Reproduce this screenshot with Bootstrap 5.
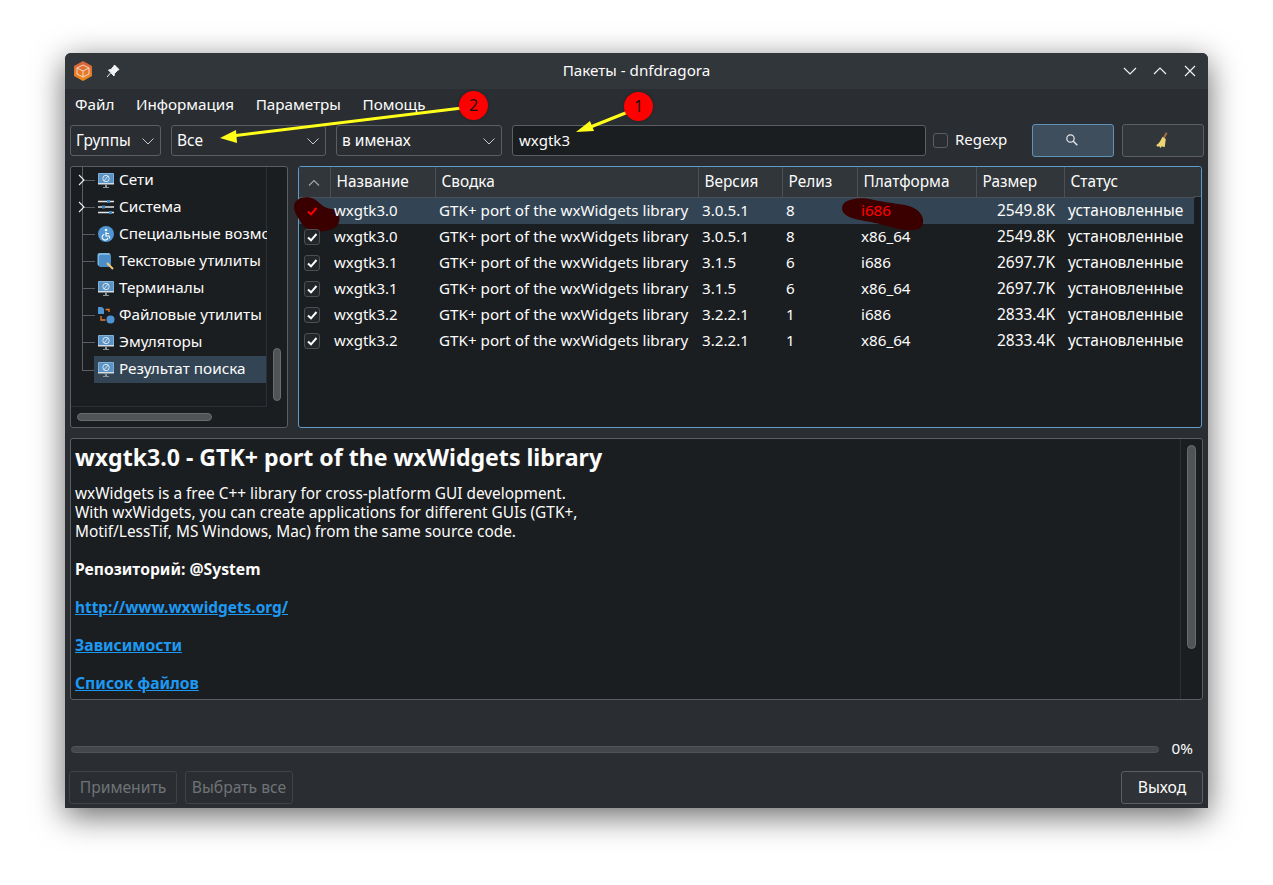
<!DOCTYPE html>
<html lang="ru">
<head>
<meta charset="utf-8">
<title>Пакеты - dnfdragora</title>
<link href="https://cdn.jsdelivr.net/npm/bootstrap@5.3.0/dist/css/bootstrap.min.css" rel="stylesheet">
<style>
html,body{background:#fff;height:885px;overflow:hidden}
body{font-family:"Noto Sans",sans-serif;font-size:15.25px;color:#fcfcfc;position:relative}
.win{position:relative;margin:53px 0 0 65px;width:1143px;height:755px;background:#2a2e32;border-radius:6px 6px 0 0;box-shadow:0 8px 32px rgba(0,0,0,.6);display:flex;flex-direction:column}
.tbar{height:36px;background:#31363b;border-radius:6px 6px 0 0;flex:none;position:relative;padding:0 8px}
.ttl{position:absolute;left:0;right:0;top:0;line-height:34px;text-align:center;font-size:15.2px}
.menubar{height:36px;padding:0 10px;gap:21.500px;flex:none;line-height:30px}
.tools{height:31px;padding:0 4px 0 5px;flex:none}
.form-select.cb,.form-control.ed{background-color:#2a2e32;border:1px solid #5b5f63;border-radius:3px;color:#fcfcfc;font-size:15.5px;height:31px;padding:0 0 1px 5px;box-shadow:none;line-height:28px}
.form-select.cb{background-position:right 5px center;background-size:14px 14px;background-image:url("data:image/svg+xml,%3csvg xmlns='http://www.w3.org/2000/svg' viewBox='0 0 14 14'%3e%3cpath fill='none' stroke='%23c8cacc' d='M1.500 4.500 7 10l5.500-5.500'/%3e%3c/svg%3e")}
.form-control.ed{background:#1b1e20;padding-left:6px;font-size:15px}
.w1{width:91px;margin-right:10px}.w2{width:155px;margin-right:10px}.w3{width:166px;margin-right:10px}.w4{width:414px;margin-right:7px}
.rx{width:15px;height:15px;border:1px solid #5b5f63;border-radius:3px;background:#2a2e32;margin-right:7px;flex:none}
.rxl{width:77px;padding-bottom:2px;font-size:15px}
.tb{height:33px;width:82px;border-radius:3px;border:1px solid #5b5f63;background:#31363b;margin-top:-1px;display:flex;align-items:center;justify-content:center;padding:0}
.tb.on{background:#3f4e5d;border-color:#5f93b8;margin-right:8px;padding-right:2px}
.mid{height:262px;margin-top:10px;padding:0 6px 0 5px;gap:10px;flex:none}
.tree{width:218px;flex:none;background:#1b1e20;border:1px solid #5b5f63;border-radius:3px;position:relative;overflow:hidden;font-size:15.3px}
.tr{height:27px;display:flex;align-items:center;position:relative;white-space:nowrap;overflow:hidden;width:196px;padding:0 0 2px 26px}
.treelist{position:absolute;left:0;top:0;width:196px;height:240px;border-right:1px solid #2c3034;border-bottom:1px solid #2c3034}
.tr.sel{background:#334554;margin-left:23px;padding-left:3px;width:172px}
.tr svg.ic{width:18px;height:18px;flex:none;margin-right:4px}
.vline{position:absolute;left:11px;top:0;width:1px;height:203px;background:#5b5f63}
.hl{position:absolute;left:11px;width:13px;height:1px;background:#5b5f63}
.exp{position:absolute;left:4px;top:6px;width:14px;height:14px}
.sb{position:absolute;background:#505456;border:1px solid #686c6e;border-radius:5px}
.frame{flex:1;background:#1b1e20;border:1px solid #5d9dcc;border-radius:3px;position:relative}
.grid{table-layout:fixed;border-collapse:collapse;width:895px;margin:0;color:#fcfcfc;font-size:15.2px}
.grid th{height:30px;background:#31363b;font-weight:400;border-right:1px solid #4b5055;border-bottom:1px solid #4b5055;padding:0 0 0 6px;white-space:nowrap;font-size:15.4px}
.grid td{height:26px;padding:0 0 2px 4px;white-space:nowrap;line-height:24px}
.grid td.ck{padding:0;vertical-align:top}
.grid tr.sel td{background:#334554}
.grid td.rgt{text-align:right;padding:0 9px 2px 0;font-size:15.5px}
.grid td.st{font-size:15.500px}
.grid td.nm{font-size:15px}
.hfill{position:absolute;left:895px;right:0;top:0;height:30px;background:#31363b;border-bottom:1px solid #4b5055;border-radius:0 3px 0 0}
.chk{display:block;width:16px;height:16px;border:1px solid #4a4f54;border-radius:3px;background:#232629;margin:5px 0 0 5px}
.chk svg{display:block;width:14px;height:14px}
.blobs{position:absolute;left:0;top:0;width:10px;height:10px;overflow:visible;z-index:0;pointer-events:none}
.over{position:relative;z-index:1}
.red{color:#f00}
.detail{height:262px;margin:10px 5px 0;background:#1b1e20;border:1px solid #5b5f63;border-radius:3px;position:relative;overflow:hidden;flex:none;padding:4px 0 0 4px;line-height:19px;font-size:15.4px}
.detail h1{font-size:23.100px;font-weight:700;line-height:28px;margin:0 0 13px;white-space:nowrap;color:#fcfcfc}
.detail p{margin:0 0 19px}
.detail p.bc{font-size:15.700px}
.detail a{color:#1d99f3;font-weight:700;text-decoration:underline}
.dsb{position:absolute;right:0;top:0;bottom:0;width:22px;border-left:1px solid #2c3034}
.prog{margin-top:43px;padding:0 15px 0 6px;height:13px;gap:13px;flex:none}
.prog span{padding-bottom:2px}
.track{flex:1;height:7px;background:#44484b;border:1px solid #505456;border-radius:4px}
.btm{margin-top:15px;padding:0 5px 0 4px;flex:none;gap:8px}
.bb{height:33px;background:#2f3337;border:1px solid #5b5f63;border-radius:3px;color:#fcfcfc;font-size:15.700px;padding:0 0 1px;line-height:30px}
.bb:disabled{background:#2a2e32;border-color:#3f4347;color:#6f7376;opacity:1}
.w108{width:108px}.w82{width:82px}
.anno{position:absolute;left:0;top:0;width:1273px;height:885px;pointer-events:none;overflow:visible}
.pin{position:absolute;width:29px;height:29px;background:#f00;color:#111;font-size:16px;line-height:28px;text-align:center;box-shadow:0 0 3px rgba(0,0,0,.35)}
</style>
</head>
<body>
<svg width="0" height="0" class="position-absolute">
<defs>
<symbol id="mon" viewBox="0 0 18 18"><rect x="1" y="2" width="16" height="11" rx="1" fill="#7fb1d8"/><rect x="2" y="3" width="14" height="9" fill="#5a93c4"/><path d="M1 12h16v1.500H1z" fill="#d5dde3"/><circle cx="9" cy="7.500" r="3.200" fill="none" stroke="#d6e4ef" stroke-width="1"/><path d="m7 10 4-5" stroke="#d6e4ef"/><path d="M6 16h6v1H6zM8 13.500h2V16H8z" fill="#8d9499"/></symbol>
<symbol id="sli" viewBox="0 0 18 18"><path d="M1 3.500h16M1 9h16M1 14.500h16" stroke="#e4e6e8" stroke-width="1.500"/><rect x="10" y="2" width="3" height="3" fill="#3d87c4"/><rect x="5" y="7.500" width="3" height="3" fill="#3d87c4"/><rect x="12" y="13" width="3" height="3" fill="#3d87c4"/></symbol>
<symbol id="acc" viewBox="0 0 18 18"><circle cx="9" cy="9" r="8" fill="#4f95d2"/><circle cx="9" cy="5" r="1.300" fill="#fff"/><path d="M9 7v4h3l1 2.500M9 8.500h3M7.300 9.200A3 3 0 1 0 11 13" fill="none" stroke="#fff" stroke-width="1.100"/></symbol>
<symbol id="txt" viewBox="0 0 18 18"><rect x="0.500" y="1" width="13" height="13" rx="2" fill="#7fb6de"/><rect x="2" y="3" width="12" height="12" rx="1.500" fill="#4b8dc6"/><path d="m10 11 6 6" stroke="#f2c879" stroke-width="2"/></symbol>
<symbol id="fil" viewBox="0 0 18 18"><path d="M1 1h4l2 2v5H1z" fill="#4b93d3"/><circle cx="13.500" cy="13.500" r="4" fill="#4b93d3"/><path d="M8.500 3.500H12V6M4 10v4h4.500" fill="none" stroke="#ee7b2b" stroke-width="1.300"/></symbol>
<symbol id="chk" viewBox="0 0 14 14"><path d="m3 7.500 3 2.800L11.500 4" fill="none" stroke="currentColor" stroke-width="2"/></symbol>
<symbol id="exp" viewBox="0 0 14 14"><path d="m4 2 5 5-5 5" fill="none" stroke="#eceff1" stroke-width="1.100"/></symbol>
</defs>
</svg>

<div class="win">
  <div class="tbar d-flex align-items-center">
    <svg width="20" height="22" viewBox="0 0 20 22" style="margin-top:-1px"><defs><linearGradient id="og" x1="0" y1="0" x2="0" y2="1"><stop offset="0" stop-color="#d2613f"/><stop offset="1" stop-color="#f08a1c"/></linearGradient></defs><path d="M10 1 19 6v10l-9 5-9-5V6z" fill="url(#og)"/><path d="m10 5 6 3v6l-6 3-6-3V8zM4 8l6 3 6-3M10 11v6" fill="none" stroke="#f6d9c4" stroke-width="1"/></svg>
    <svg width="14" height="14" viewBox="0 0 14 14" style="margin-left:13px"><path d="M8.500 1 13 5.500 11.500 6.500 8.500 9.500 8 12 2.500 6 5 5.500 7.500 2.500zM4.500 9 1 13" fill="#f2f3f4" stroke="#f2f3f4" stroke-width="1"/></svg>
    <div class="ttl">Пакеты - dnfdragora</div>
    <div class="ms-auto d-flex gap-3 position-relative" style="margin-right:3px">
      <svg width="14" height="14" viewBox="0 0 14 14"><path d="m1 4 6 6 6-6" fill="none" stroke="#f0f1f2" stroke-width="1.200"/></svg>
      <svg width="14" height="14" viewBox="0 0 14 14"><path d="m1 10 6-6 6 6" fill="none" stroke="#f0f1f2" stroke-width="1.200"/></svg>
      <svg width="14" height="14" viewBox="0 0 14 14"><path d="m2 2 10 10M12 2 2 12" fill="none" stroke="#f0f1f2" stroke-width="1.200"/></svg>
    </div>
  </div>
  <div class="menubar d-flex"><span>Файл</span><span>Информация</span><span>Параметры</span><span>Помощь</span></div>
  <div class="tools d-flex align-items-center">
    <select class="form-select cb w1"><option>Группы</option></select>
    <select class="form-select cb w2"><option>Все</option></select>
    <select class="form-select cb w3"><option>в именах</option></select>
    <input class="form-control ed w4" value="wxgtk3">
    <span class="rx"></span><span class="rxl">Regexp</span>
    <button class="btn tb on" aria-label="Поиск"><svg width="14" height="14" viewBox="0 0 14 14"><circle cx="5.500" cy="5.500" r="3.700" fill="none" stroke="#e6e8ea" stroke-width="1.200"/><path d="m8.300 8.300 4 4" stroke="#e6e8ea" stroke-width="1.400"/></svg></button>
    <button class="btn tb" aria-label="Очистить"><svg width="18" height="18" viewBox="0 0 16 16"><path d="M10.500 1 12 2 9.500 6.500 8 5.500z" fill="#a8733a"/><path d="M7.500 5 10.500 7 9.500 14.500 7 13.500 6 15 4.500 13.500 3 14 2 12.500C4.500 11 6 8.500 7.500 5z" fill="#ecd373"/></svg></button>
  </div>

  <div class="mid d-flex">
    <div class="tree">
      <div class="treelist">
        <div class="vline"></div>
        <div class="tr"><i class="hl" style="top:13px"></i><svg class="exp"><use href="#exp"/></svg><svg class="ic"><use href="#mon"/></svg>Сети</div>
        <div class="tr"><i class="hl" style="top:13px"></i><svg class="exp"><use href="#exp"/></svg><svg class="ic"><use href="#sli"/></svg>Система</div>
        <div class="tr"><i class="hl" style="top:13px"></i><svg class="ic"><use href="#acc"/></svg>Специальные возможности</div>
        <div class="tr"><i class="hl" style="top:13px"></i><svg class="ic"><use href="#txt"/></svg>Текстовые утилиты</div>
        <div class="tr"><i class="hl" style="top:13px"></i><svg class="ic"><use href="#mon"/></svg>Терминалы</div>
        <div class="tr"><i class="hl" style="top:13px"></i><svg class="ic"><use href="#fil"/></svg>Файловые утилиты</div>
        <div class="tr"><i class="hl" style="top:13px"></i><svg class="ic"><use href="#mon"/></svg>Эмуляторы</div>
        <div class="tr sel"><svg class="ic"><use href="#mon"/></svg>Результат поиска</div>
        <i class="hl" style="top:203px;width:12px"></i>
      </div>
      <div class="sb" style="left:202px;top:181px;width:8px;height:53px"></div>
      <div class="sb" style="left:6px;top:246px;width:135px;height:8px"></div>
    </div>
    <div class="frame">
      <div class="hfill"></div>
      <table class="grid">
        <colgroup><col style="width:31px"><col style="width:105px"><col style="width:263px"><col style="width:84px"><col style="width:75px"><col style="width:119px"><col style="width:88px"><col style="width:130px"></colgroup>
        <thead><tr>
          <th class="text-center" style="padding:0"><svg width="14" height="14" viewBox="0 0 14 14"><path d="m2 9.500 5-5 5 5" fill="none" stroke="#a5a8aa" stroke-width="1.100"/></svg></th>
          <th>Название</th><th>Сводка</th><th>Версия</th><th>Релиз</th><th>Платформа</th><th>Размер</th><th>Статус</th>
        </tr></thead>
        <tbody>
          <tr class="sel">
            <td class="ck"><span class="chk over" style="background:none;border-color:transparent;color:#f00"><svg><use href="#chk"/></svg></span></td>
            <td class="nm"><span class="over">wxgtk3.0</span></td><td>GTK+ port of the wxWidgets library</td><td>3.0.5.1</td><td>8</td>
            <td><span class="over red">i686</span></td>
            <td class="rgt">2549.8K</td><td class="st">установленные</td>
          </tr>
          <tr><td class="ck"><span class="chk over"><svg><use href="#chk"/></svg></span></td><td class="nm"><span class="over">wxgtk3.0</span></td><td>GTK+ port of the wxWidgets library</td><td>3.0.5.1</td><td>8</td><td>x86_64</td><td class="rgt">2549.8K</td><td class="st">установленные</td></tr>
          <tr><td class="ck"><span class="chk"><svg><use href="#chk"/></svg></span></td><td class="nm">wxgtk3.1</td><td>GTK+ port of the wxWidgets library</td><td>3.1.5</td><td>6</td><td>i686</td><td class="rgt">2697.7K</td><td class="st">установленные</td></tr>
          <tr><td class="ck"><span class="chk"><svg><use href="#chk"/></svg></span></td><td class="nm">wxgtk3.1</td><td>GTK+ port of the wxWidgets library</td><td>3.1.5</td><td>6</td><td>x86_64</td><td class="rgt">2697.7K</td><td class="st">установленные</td></tr>
          <tr><td class="ck"><span class="chk"><svg><use href="#chk"/></svg></span></td><td class="nm">wxgtk3.2</td><td>GTK+ port of the wxWidgets library</td><td>3.2.2.1</td><td>1</td><td>i686</td><td class="rgt">2833.4K</td><td class="st">установленные</td></tr>
          <tr><td class="ck"><span class="chk"><svg><use href="#chk"/></svg></span></td><td class="nm">wxgtk3.2</td><td>GTK+ port of the wxWidgets library</td><td>3.2.2.1</td><td>1</td><td>x86_64</td><td class="rgt">2833.4K</td><td class="st">установленные</td></tr>
        </tbody>
      </table>
      <svg class="blobs" viewBox="0 0 10 10"><g transform="translate(-299 -167)" fill="#3a0000"><path d="M294 208C293 198 306 195 314 199 320 202 322 208 332 209 342 211 342 226 332 229 322 233 308 232 302 224 298 218 295 214 294 208Z"/><path d="M842 208C842 199 860 196 874 200 884 202 892 203 905 205 920 208 926 218 922 226 916 234 896 229 880 224 865 220 842 220 842 208Z"/></g></svg>
    </div>
  </div>

  <div class="detail">
    <h1>wxgtk3.0 - GTK+ port of the wxWidgets library</h1>
    <p>wxWidgets is a free C++ library for cross-platform GUI development.<br>With wxWidgets, you can create applications for different GUIs (GTK+,<br>Motif/LessTif, MS Windows, Mac) from the same source code.</p>
    <p class="fw-bold bc">Репозиторий: @System</p>
    <p><a href="#">http://www.wxwidgets.org/</a></p>
    <p class="bc"><a href="#">Зависимости</a></p>
    <p class="bc"><a href="#">Список файлов</a></p>
    <div class="dsb"><div class="sb" style="left:6px;top:6px;width:9px;height:204px"></div></div>
  </div>

  <div class="prog d-flex align-items-center"><div class="track"></div><span>0%</span></div>
  <div class="btm d-flex">
    <button class="btn bb w108" disabled>Применить</button>
    <button class="btn bb w108" disabled>Выбрать все</button>
    <button class="btn bb w82 ms-auto">Выход</button>
  </div>
</div>

<svg class="anno" viewBox="0 0 1273 885">
  <path d="M628 112 588 128" stroke="#ffff1a" stroke-width="3" fill="none"/>
  <path d="M576 132 590 121 594 131Z" fill="#ffff1a"/>
  <path d="M462 108 232 136" stroke="#ffff1a" stroke-width="3" fill="none"/>
  <path d="M220 138 236 130 237 143Z" fill="#ffff1a"/>
</svg>
<div class="pin rounded-circle" style="left:624px;top:92px">1</div>
<div class="pin rounded-circle" style="left:459px;top:91px">2</div>
</body>
</html>
